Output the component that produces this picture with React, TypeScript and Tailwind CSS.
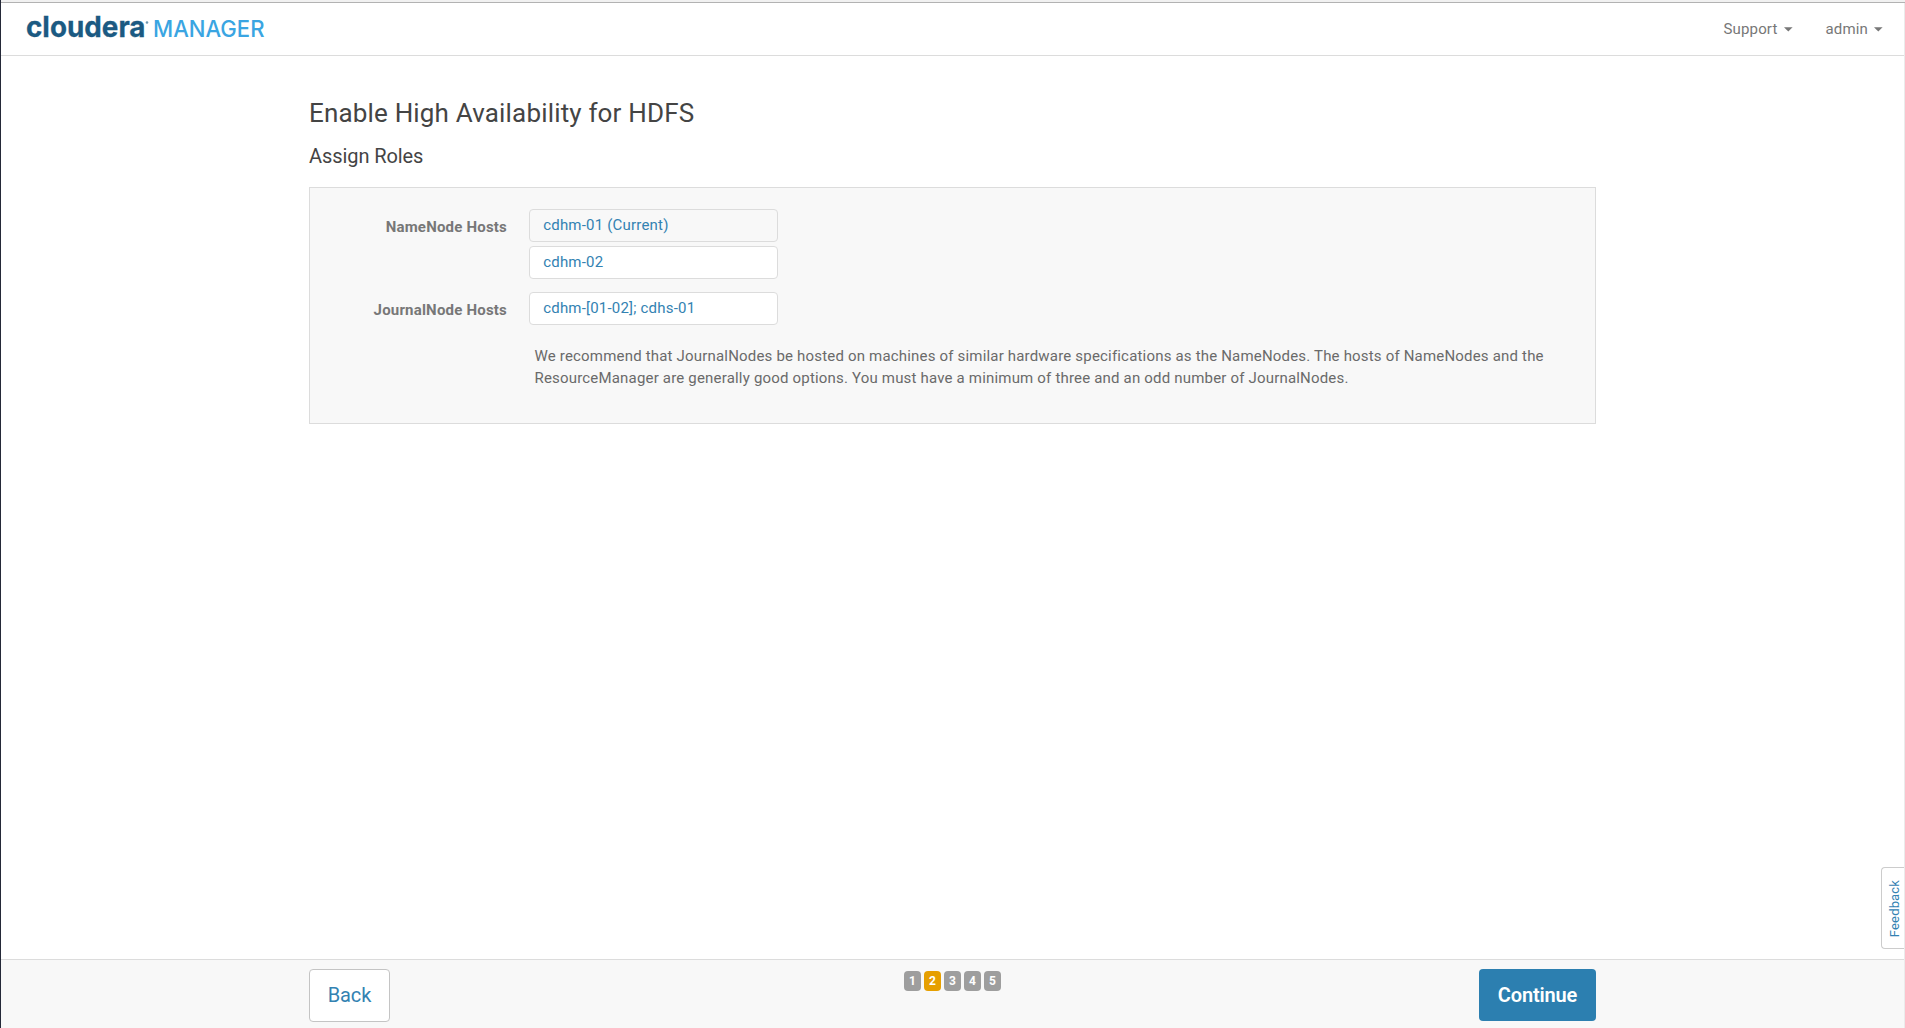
import React from "react";

function Logo() {
  return (
    <svg width="244" height="46" viewBox="0 0 244 46" role="img" aria-label="cloudera MANAGER">
      <text x="0" y="30" fontFamily="Inter, sans-serif" fontWeight="700" fontSize="29" letterSpacing="0" fill="#1b5a82" stroke="#1b5a82" strokeWidth="0.3" textLength="119.5" lengthAdjust="spacingAndGlyphs">
        cloudera
      </text>
      <circle cx="121" cy="15.5" r="1.3" fill="#6f98b1" />
      <text x="127" y="30" fontFamily="Inter, sans-serif" fontWeight="500" fontSize="23" letterSpacing="0" fill="#3aa5e2" textLength="111.5" lengthAdjust="spacingAndGlyphs">
        MANAGER
      </text>
    </svg>
  );
}

function Menu({ label }: { label: string }) {
  return (
    <button className="flex items-center gap-[6px] tracking-[0.15px] text-[#777]">
      {label}
      <svg width="9" height="5" viewBox="0 0 9 5" className="mt-px" aria-hidden="true">
        <path d="M0 0.3H8.6L4.3 4.6Z" fill="#777" />
      </svg>
    </button>
  );
}

function HostField({ value, current = false }: { value: string; current?: boolean }) {
  return (
    <div className={`h-[33px] w-[249px] rounded-[4px] border border-[#dcdcdc] pl-[13.2px] leading-[31px] text-[#3382b2] ${current ? "bg-[#f8f8f8]" : "bg-white"}`}>
      {value}
    </div>
  );
}

function FieldRow({ label, children }: { label: string; children: React.ReactNode }) {
  return (
    <div className="flex">
      <div className="mr-[22px] w-[197px] pt-[7px] text-right leading-[22px] font-bold text-[#777]">{label}</div>
      <div className="flex flex-col gap-1">{children}</div>
    </div>
  );
}

export default function App() {
  return (
    <div className="flex h-screen flex-col overflow-hidden border-l border-[#242938] bg-white font-['Roboto',sans-serif] text-[15px] tracking-[0.2px] text-[#6a6a6a]">
      <div className="h-[3px] shrink-0 border-b border-[#b2b2b2] bg-[#f1f1f1]" />
      <div className="relative flex min-h-0 grow flex-col border-r border-[#ebebeb]">
        <header className="flex h-[53px] shrink-0 items-start justify-between border-b border-[#dcdcdc] pt-[4px] pr-[21px] pl-[25px]">
          <Logo />
          <nav className="flex gap-[33px] pt-[11px] leading-[22px]">
            <Menu label="Support" />
            <Menu label="admin" />
          </nav>
        </header>

        <main className="mx-auto w-[1287px] grow pt-[41px]">
          <h1 className="text-[26px] leading-[32px] tracking-[0.17px] text-[#444]">Enable High Availability for HDFS</h1>
          <h2 className="mt-[14px] text-[20px] leading-[26px] tracking-[-0.08px] text-[#444]">Assign Roles</h2>
          <section className="mt-[18px] h-[237px] border border-[#dcdcdc] bg-[#f8f8f8] pt-[21px]">
            <div className="flex flex-col gap-[13px]">
              <FieldRow label="NameNode Hosts">
                <HostField value="cdhm-01 (Current)" current />
                <HostField value="cdhm-02" />
              </FieldRow>
              <FieldRow label="JournalNode Hosts">
                <HostField value="cdhm-[01-02]; cdhs-01" />
              </FieldRow>
            </div>
            <p className="mt-[20px] ml-[224.5px] leading-[22px] tracking-[0.185px] whitespace-nowrap">
              We recommend that JournalNodes be hosted on machines of similar hardware specifications as the NameNodes. The hosts of NameNodes and the
              <br />
              ResourceManager are generally good options. You must have a minimum of three and an odd number of JournalNodes.
            </p>
          </section>
        </main>

        <button className="absolute right-0 bottom-[79px] flex h-[82px] w-[23px] items-center justify-center rounded-l-[4px] border border-r-0 border-[#ccc] bg-white pt-px pl-[3px] text-[#3382b2]">
          <span className="rotate-180 text-[13px] leading-[18px] tracking-[0.15px] [writing-mode:vertical-rl]">Feedback</span>
        </button>

        <footer className="h-[69px] shrink-0 border-t border-[#dcdcdc] bg-[#f8f8f8] pt-[9px]">
          <div className="mx-auto flex w-[1287px] items-start justify-between">
            <div className="flex flex-1">
              <button className="h-[53px] w-[81px] rounded-[4px] border border-[#c4c4c4] bg-white pb-[2px] text-[20px] tracking-[-0.1px] text-[#3382b2]">Back</button>
            </div>
            <div className="flex gap-[3px] pt-[2px] text-[12px] font-bold tracking-[0px] text-white">
              {[1, 2, 3, 4, 5].map((n) => (
                <span key={n} className={`flex h-5 w-[17px] items-center justify-center rounded-[4px] ${n === 2 ? "bg-[#e69f00]" : "bg-[#9e9e9e]"}`}>
                  {n}
                </span>
              ))}
            </div>
            <div className="flex flex-1 justify-end">
              <button className="h-[52px] w-[117px] rounded-[4px] bg-[#2c7fb0] text-[20px] font-semibold tracking-[-0.15px] text-white">Continue</button>
            </div>
          </div>
        </footer>
      </div>
    </div>
  );
}
